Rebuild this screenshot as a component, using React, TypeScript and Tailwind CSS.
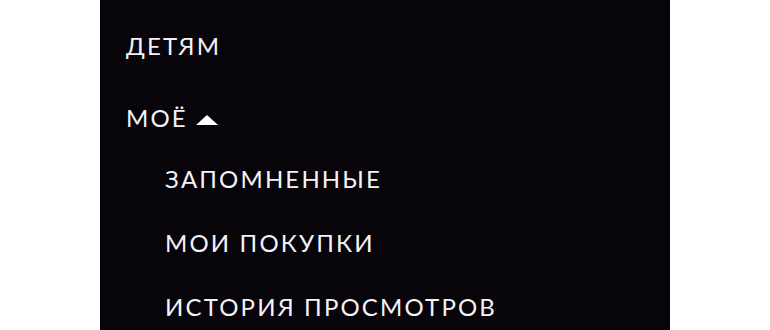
export default function App() {
  return (
    <div className="w-[770px] h-[330px] bg-white overflow-hidden">
      <div
        className="ml-[100px] w-[570px] h-[330px] bg-[#07040a] pl-[26px] pt-[34px] flex flex-col text-[#f4f2f6] text-[24px] font-normal leading-none tracking-[0.09em] uppercase"
        style={{ fontFamily: 'Lato, "Noto Sans", sans-serif' }}
      >
        <div>Детям</div>
        <div className="mt-[48px] flex items-center">
          <span>Моё</span>
          <svg width="22" height="10" viewBox="0 0 22 10" className="ml-[8px] mt-[4px]">
            <polygon points="11,0 22,10 0,10" fill="#ffffff" />
          </svg>
        </div>
        <div className="pl-[39px] flex flex-col">
          <div className="mt-[37px]">Запомненные</div>
          <div className="mt-[40px]">Мои покупки</div>
          <div className="mt-[40px]">История просмотров</div>
        </div>
      </div>
    </div>
  );
}
